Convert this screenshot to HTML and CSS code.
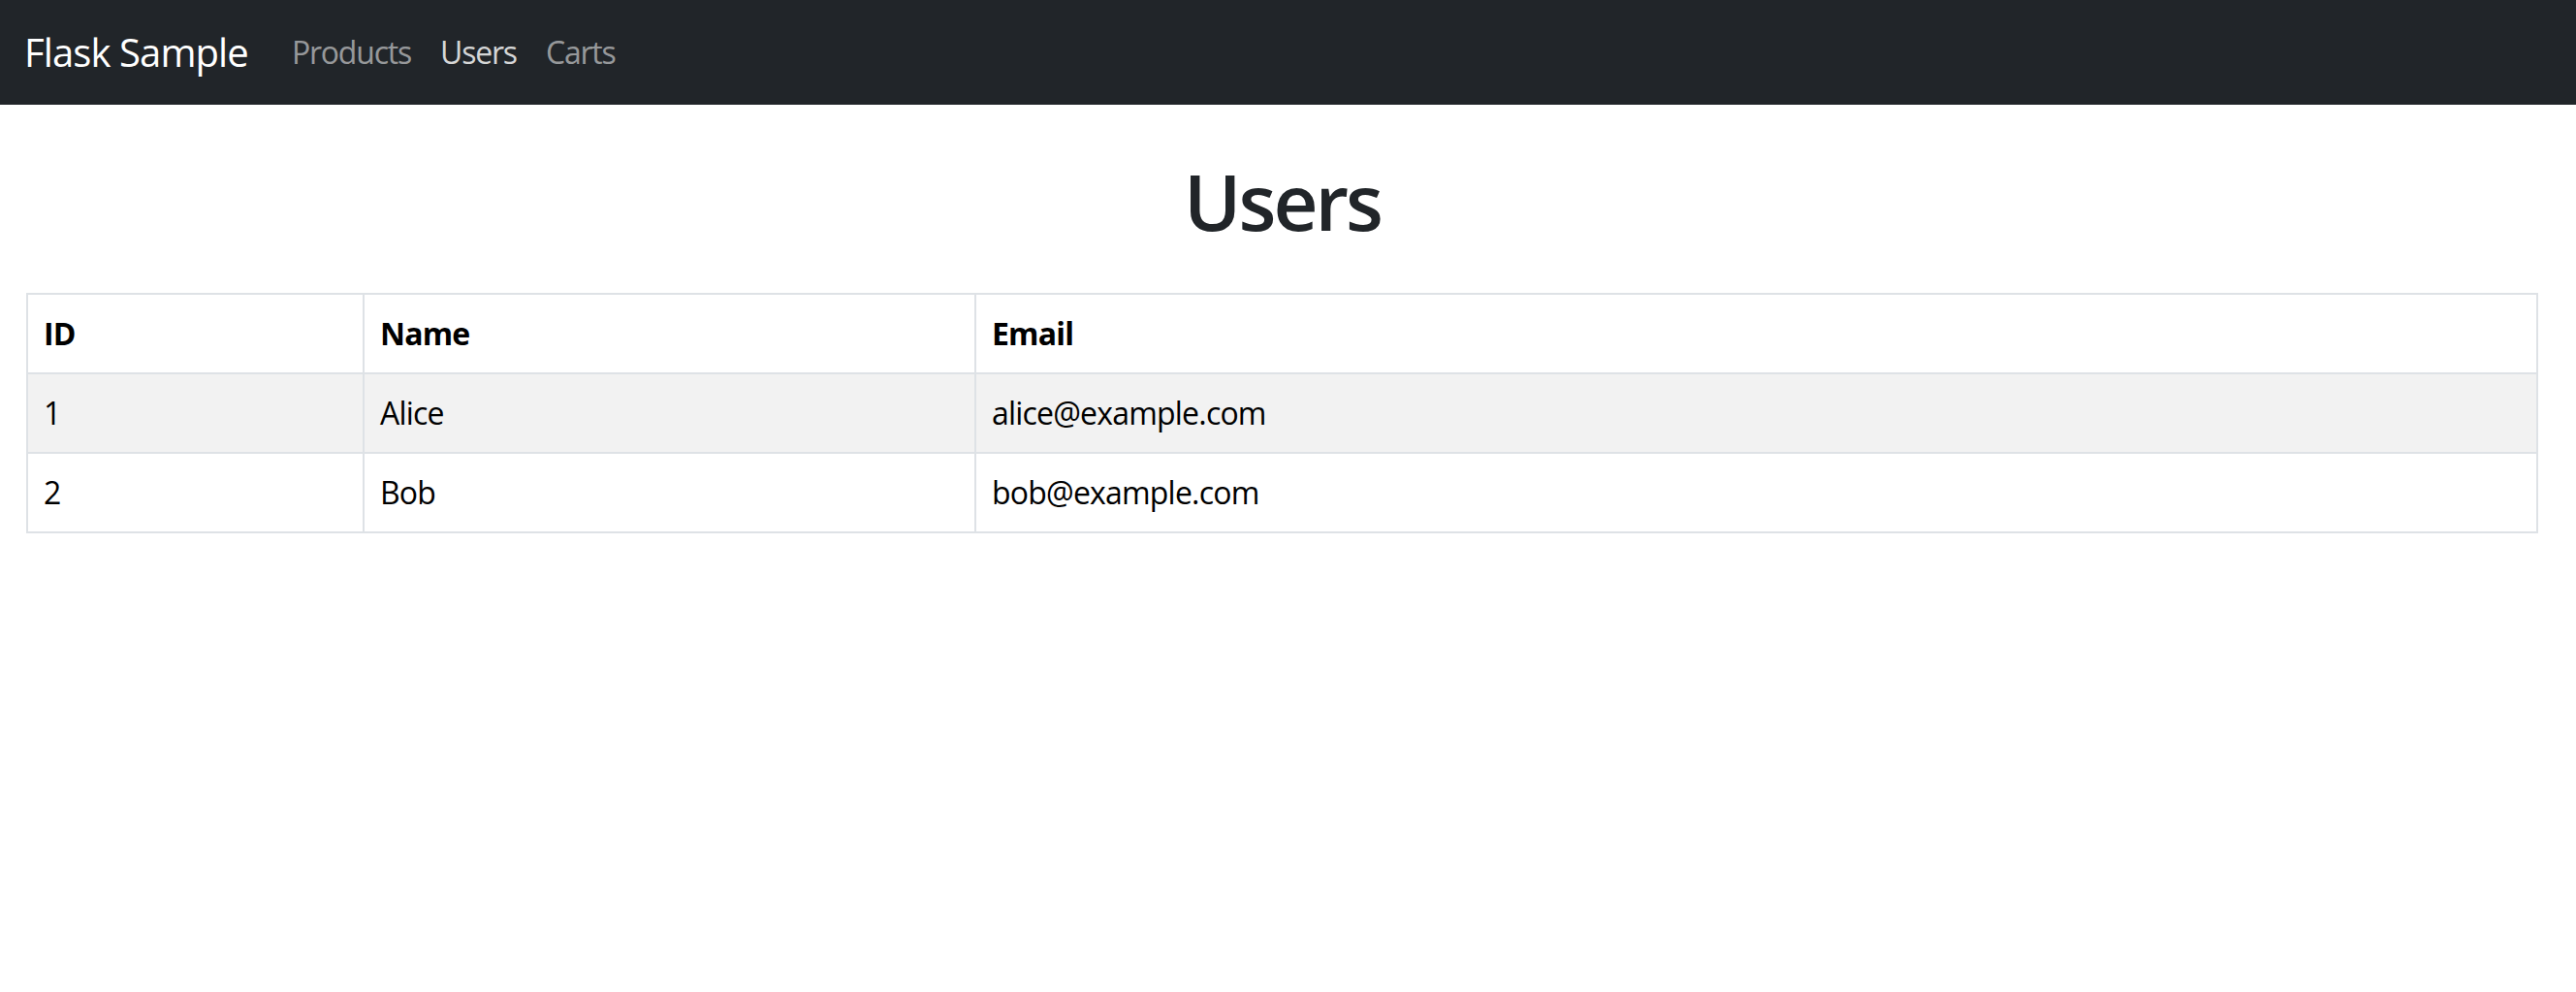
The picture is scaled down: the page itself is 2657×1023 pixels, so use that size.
FILE: index.html
```html
<!DOCTYPE html>
<html lang="en">
<head>
<meta charset="utf-8">
<title>Users - Flask Sample</title>
<link rel="stylesheet" href="styles.css">
</head>
<body>
<nav class="navbar">
  <a class="brand" href="#">Flask Sample</a>
  <ul class="nav">
    <li><a class="nav-link" href="#">Products</a></li>
    <li><a class="nav-link active" href="#">Users</a></li>
    <li><a class="nav-link" href="#">Carts</a></li>
  </ul>
</nav>
<main class="container">
  <h1 class="title">Users</h1>
  <table class="data-table">
    <colgroup>
      <col class="col-id">
      <col class="col-name">
      <col class="col-email">
    </colgroup>
    <thead>
      <tr><th>ID</th><th>Name</th><th>Email</th></tr>
    </thead>
    <tbody>
      <tr class="striped"><td>1</td><td>Alice</td><td>alice@example.com</td></tr>
      <tr><td>2</td><td>Bob</td><td>bob@example.com</td></tr>
    </tbody>
  </table>
</main>
</body>
</html>
```

FILE: styles.css
```css
* {
  box-sizing: border-box;
}

html, body {
  margin: 0;
  padding: 0;
  background: #ffffff;
}

body {
  font-family: "Open Sans", "Noto Sans", "Liberation Sans", sans-serif;
  font-size: 32px;
  line-height: 1.5;
  color: #212529;
}

.navbar {
  display: flex;
  align-items: center;
  height: 108px;
  padding: 0 24px 0 25px;
  background: #212529;
}

.brand {
  font-size: 40px;
  line-height: 60px;
  color: #ffffff;
  text-decoration: none;
  margin-right: 30px;
  letter-spacing: -0.9px;
}

.nav {
  display: flex;
  list-style: none;
  margin: 0;
  padding: 0;
}

.nav-link {
  display: block;
  padding: 0 15px;
  font-size: 32px;
  line-height: 48px;
  color: rgba(255, 255, 255, 0.55);
  text-decoration: none;
  letter-spacing: -1.2px;
}

.nav-link.active {
  color: rgba(255, 255, 255, 0.82);
}

.container {
  padding: 0 39px 0 27px;
}

.title {
  margin: 51px 0 47px;
  font-size: 80px;
  line-height: 96px;
  font-weight: 600;
  text-align: center;
  color: #212529;
  letter-spacing: -3px;
}

.data-table {
  width: 100%;
  border-collapse: collapse;
  table-layout: fixed;
  color: #000000;
}

.col-id {
  width: 347px;
}

.col-name {
  width: 631px;
}

.data-table th,
.data-table td {
  border: 2px solid #dee2e6;
  padding: 16px;
  text-align: left;
  line-height: 48px;
  letter-spacing: -0.8px;
}

.data-table th {
  font-weight: 700;
}

.data-table .striped td {
  background: #f2f2f2;
}
```
